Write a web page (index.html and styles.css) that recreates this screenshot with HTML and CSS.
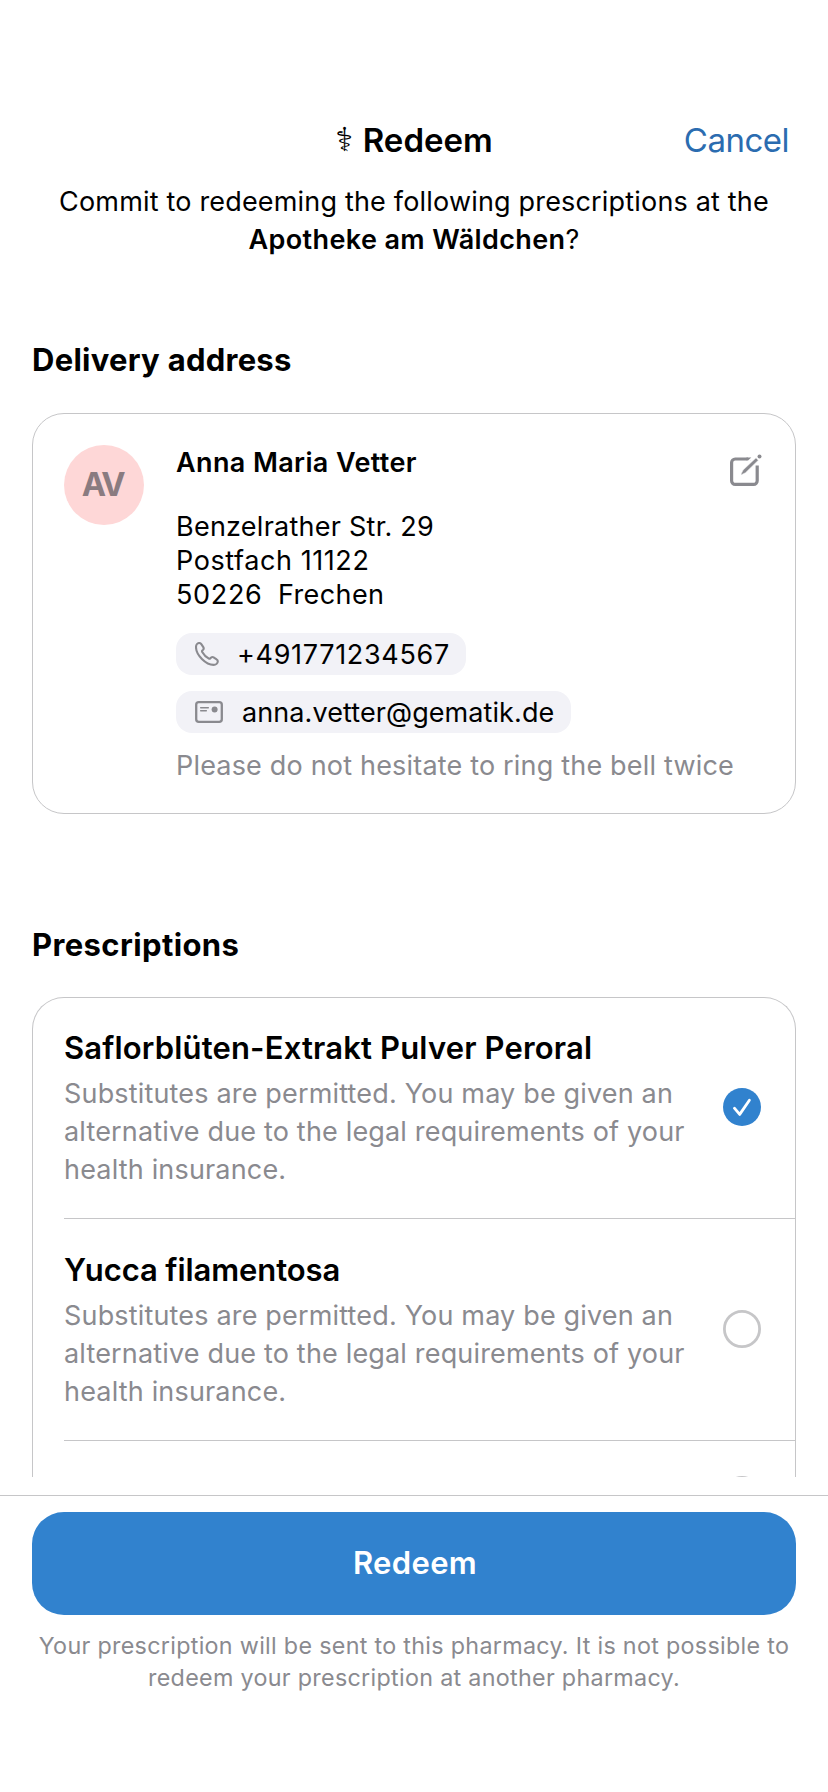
FILE: index.html
```html
<!DOCTYPE html>
<html lang="en">
<head>
<meta charset="utf-8">
<title>Redeem</title>
<link rel="stylesheet" href="styles.css">
</head>
<body>
<div class="screen">
  <header class="nav">
    <h1 class="nav-title"><span class="nav-symbol">⚕</span>Redeem</h1>
    <a class="nav-cancel">Cancel</a>
  </header>

  <main class="content">
    <p class="intro">Commit to redeeming the following prescriptions at the<br><strong>Apotheke am Wäldchen</strong>?</p>

    <h2 class="section-title section-address">Delivery address</h2>
    <section class="card address">
      <div class="avatar">AV</div>
      <div class="address-body">
        <div class="name">Anna Maria Vetter</div>
        <div class="lines">
          <div class="line-street">Benzelrather Str. 29</div>
          <div class="line-box">Postfach 11122</div>
          <div class="line-city"><span class="zip">50226</span><span class="city">Frechen</span></div>
        </div>
        <div class="chips">
          <div class="chip chip-phone">
            <svg class="icon-phone" width="24" height="24" viewBox="0 0 24 24" fill="none" stroke="#8a8a8f" stroke-width="2.1" stroke-linejoin="round"><path d="M1 5.2C1 2.6 2.6 1 4.3 1c.9 0 1.500.5 2 1.200l2 3c.6.9.5 1.700-.1 2.400l-.9 1c-.4.4-.4.8-.1 1.300 1.300 2.300 4.400 5.400 6.700 6.700.5.3.9.2 1.300-.2l1-.9c.7-.6 1.500-.7 2.400-.1l3 2c.8.5 1.200 1.100 1.200 1.900 0 1.900-1.800 3.600-4.200 3.600C10.900 22.900 1 13 1 5.200Z"/></svg>
            <span>+491771234567</span>
          </div>
          <div class="chip chip-mail">
            <svg class="icon-mail" width="28" height="22" viewBox="0 0 28 22" fill="none" stroke="#8a8a8f"><rect x="1.200" y="1.200" width="25.600" height="19.600" rx="2.600" stroke-width="2.300"/><path d="M5.700 6.700h7.600M5.700 9.800h5.600" stroke-width="1.500" stroke-linecap="round"/><circle cx="19.600" cy="8.400" r="3" fill="#8a8a8f" stroke="none"/></svg>
            <span>anna.vetter@gematik.de</span>
          </div>
        </div>
        <div class="note">Please do not hesitate to ring the bell twice</div>
      </div>
      <svg class="icon-edit" width="32" height="32" viewBox="0 0 32 32" fill="none" stroke="#8a8a8f"><path d="M20.600 5H5.200A3.600 3.600 0 0 0 1.600 8.600v18.200a3.600 3.600 0 0 0 3.600 3.600h18.400a3.600 3.600 0 0 0 3.600-3.600V11.600" stroke-width="3.200"/><path d="M18.200 2.600h5.600l-3.900 4.600h-3.200Z" fill="#fff" stroke="none"/><path d="M16.500 3.400h4.800l-3.300 3.200h-1.500Z" fill="#8a8a8f" stroke="none"/><path d="M26 3.800l2.400 2.400L15.600 18.700l-4 2a.5.5 0 0 1-.6-.6l2-4Z" fill="#8a8a8f" stroke="#fff" stroke-width="0.600"/><circle cx="29.500" cy="2.400" r="2" fill="#8a8a8f" stroke="none"/></svg>
    </section>

    <h2 class="section-title section-prescriptions">Prescriptions</h2>
    <section class="card prescriptions">
      <div class="item">
        <div class="item-text">
          <h3 class="item-title">Saflorblüten-Extrakt Pulver Peroral</h3>
          <p class="item-desc">Substitutes are permitted. You may be given an<br>alternative due to the legal requirements of your<br>health insurance.</p>
        </div>
        <svg class="radio" width="38" height="38" viewBox="0 0 38 38" fill="none"><circle cx="19" cy="19" r="19" fill="#3182ce"/><path d="M11.400 20.200l5.300 6.200 9.700-14.200" stroke="#fff" stroke-width="2.800" stroke-linecap="round" stroke-linejoin="round"/></svg>
      </div>
      <div class="item">
        <div class="item-text">
          <h3 class="item-title item-title-tight">Yucca filamentosa</h3>
          <p class="item-desc">Substitutes are permitted. You may be given an<br>alternative due to the legal requirements of your<br>health insurance.</p>
        </div>
        <svg class="radio" width="38" height="38" viewBox="0 0 38 38" fill="none"><circle cx="19" cy="19" r="17.600" stroke="#c6c6c8" stroke-width="2.800"/></svg>
      </div>
      <div class="item item-partial">
        <svg class="radio" width="38" height="38" viewBox="0 0 38 38" fill="none"><circle cx="19" cy="19" r="17.600" stroke="#c6c6c8" stroke-width="2.800"/></svg>
      </div>
    </section>
  </main>

  <footer class="bottom">
    <button class="redeem">Redeem</button>
    <p class="hint">Your prescription will be sent to this pharmacy. It is not possible to<br>redeem your prescription at another pharmacy.</p>
  </footer>
</div>
</body>
</html>
```
FILE: styles.css
```css
* { box-sizing: border-box; margin: 0; padding: 0; }

body {
  background: #fff;
  overflow: hidden;
}

.screen {
  width: 828px;
  height: 1792px;
  display: flex;
  flex-direction: column;
  background: #fff;
  color: #000;
  font: 400 27px/38px Inter, "Liberation Sans", sans-serif;
  white-space: nowrap;
}

.nav {
  height: 160px;
  padding: 120px 40px 0;
  display: grid;
  grid-template-columns: 1fr auto 1fr;
  flex: none;
  line-height: 40px;
}

.nav-title {
  grid-column: 2;
  display: flex;
  font-size: 33px;
  font-weight: 600;
}

.nav-symbol {
  width: 27.5px;
  font-family: "DejaVu Sans", sans-serif;
  font-weight: 400;
}

.nav-cancel {
  justify-self: end;
  margin-right: -1px;
  color: #2b6cb0;
  font-size: 33px;
  letter-spacing: -0.5px;
}

.content {
  height: 1317px;
  flex: none;
  overflow: hidden;
  padding: 23px 32px 0;
}

.intro {
  text-align: center;
  letter-spacing: 0.18px;
}

.intro strong { font-weight: 600; letter-spacing: 0.38px; }

.section-title {
  font-size: 31px;
  font-weight: 700;
  line-height: 38px;
}

.section-address { margin: 82px 0 34px; letter-spacing: 0.264px; }
.section-prescriptions { margin: 112px 0 33px; letter-spacing: 0.385px; }

.card {
  border: 1px solid #c6c6c8;
  border-radius: 32px;
}

.address {
  height: 401px;
  padding: 31px 33px 0 31px;
  display: flex;
  align-items: flex-start;
  line-height: 34px;
}

.avatar {
  width: 80px;
  height: 80px;
  flex: none;
  padding-right: 3px;
  border-radius: 50%;
  background: #fed7d7;
  color: #8a7b80;
  font-size: 32.600px;
  font-weight: 700;
  line-height: 78px;
  letter-spacing: -2.300px;
  text-align: center;
}

.address-body {
  flex: 1;
  min-width: 0;
  margin-left: 32px;
  padding-top: 1px;
}

.name { font-weight: 600; letter-spacing: 0.380px; }

.lines { margin-top: 30px; }
.line-street { letter-spacing: 0.250px; }
.line-box { letter-spacing: 0.580px; }
.line-city { display: flex; }
.zip { width: 102px; letter-spacing: 0.655px; }
.city { letter-spacing: 0.377px; }

.chips {
  margin-top: 21px;
  display: flex;
  flex-direction: column;
  gap: 16px;
}

.chip {
  height: 42px;
  padding-left: 19px;
  border-radius: 16px;
  background: #f2f2f7;
  display: flex;
  align-items: center;
}

.chip span { padding-top: 2px; }

.chip-phone { width: 290px; gap: 18px; letter-spacing: 0.680px; }
.chip-mail { width: 395px; gap: 19px; letter-spacing: 0.084px; }

.note {
  margin-top: 16px;
  color: #8a8a8f;
  letter-spacing: 0.184px;
}

.icon-edit { flex: none; margin-top: 9px; }

.prescriptions { border-bottom: 0; border-radius: 32px 32px 0 0; }

.item {
  height: 221px;
  margin-left: 31px;
  padding: 31px 34px 0 0;
  border-bottom: 1px solid #c6c6c8;
  display: flex;
  justify-content: space-between;
}

.item + .item { height: 222px; padding-top: 32px; }

.item-title {
  font-size: 31px;
  font-weight: 600;
  line-height: 38px;
  letter-spacing: 0.162px;
}

.item-title-tight { letter-spacing: -0.088px; }

.item-desc {
  margin-top: 8px;
  color: #8a8a8f;
  letter-spacing: 0.170px;
}

.radio { flex: none; margin-top: 59px; }

.item + .item-partial { padding-top: 35px; justify-content: flex-end; border-bottom: 0; }
.item-partial .radio { margin-top: 0; }

.bottom {
  margin-top: 18px;
  padding: 16px 32px 0;
  border-top: 1px solid #c6c6c8;
  flex: 1;
}

.redeem {
  display: block;
  width: 100%;
  height: 103px;
  padding: 0 0 2px 2px;
  border: 0;
  border-radius: 32px;
  background: #3182ce;
  color: #fff;
  font: 600 31px/38px Inter, "Liberation Sans", sans-serif;
  letter-spacing: 0.350px;
}

.hint {
  margin-top: 15px;
  color: #8a8a8f;
  font-size: 23.300px;
  line-height: 32px;
  letter-spacing: 0.305px;
  text-align: center;
}
```
